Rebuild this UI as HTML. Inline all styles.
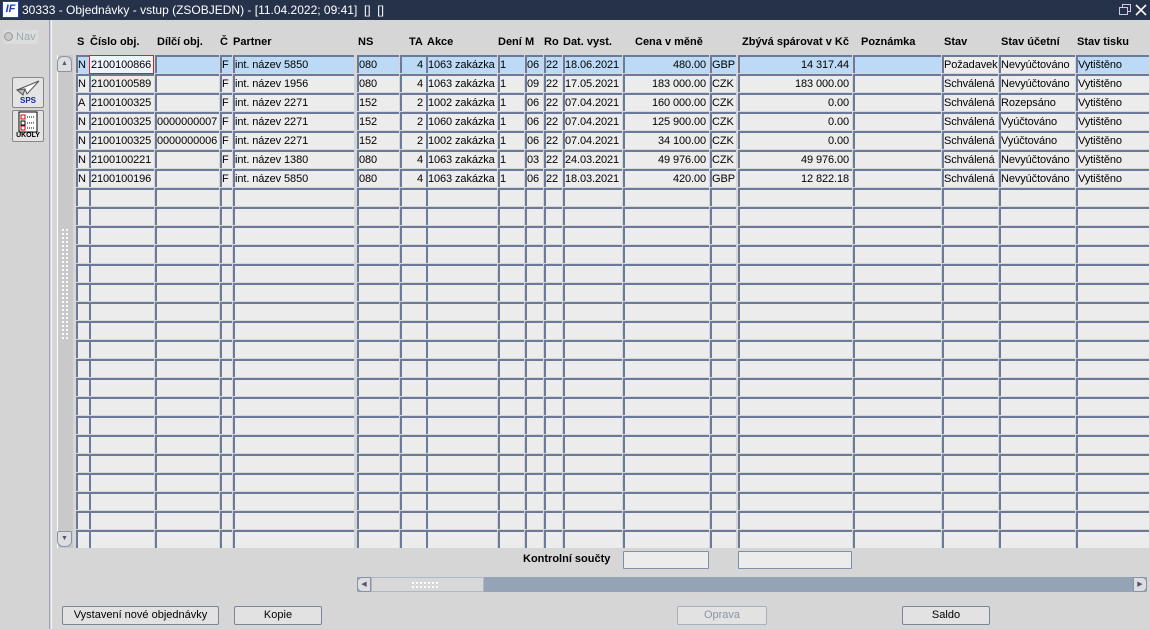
<!DOCTYPE html>
<html><head><meta charset="utf-8">
<style>
*{box-sizing:border-box;margin:0;padding:0}
body{width:1150px;height:629px;overflow:hidden;background:#d6d6d6;font-family:"Liberation Sans",sans-serif;font-size:11px;color:#000;position:relative}
.title{position:absolute;left:0;top:0;width:1150px;height:20px;background:#25324a;color:#fff;font-size:12px;line-height:20px}
.title .ico{position:absolute;left:2px;top:1px;width:17px;height:17px;background:#fff;border:1px solid #2040c0;color:#1a3cc8;font-weight:bold;font-style:italic;font-size:11px;line-height:15px;text-align:center}
.title .t{position:absolute;left:22px;top:0}
.left{position:absolute;left:0;top:20px;width:50px;height:609px;background:#d4d4d4;border-right:1px solid #9aa3b3}
.left:after{content:"";position:absolute;right:-3px;top:0;width:1px;height:609px;background:#f4f4f4}
.h{position:absolute;top:36px;font-weight:bold;font-size:11px}
.col{position:absolute;top:55px;height:494px;
background:repeating-linear-gradient(to bottom,#6a7a98 0 2px,transparent 2px 18px,#d6d6d6 18px 19px),linear-gradient(to right,#6a7a98 0 2px,#ececec 2px)}
.col div{height:19px;line-height:20px;padding-left:2px;white-space:nowrap;overflow:hidden;letter-spacing:-0.1px}
.col div.b{background:linear-gradient(to bottom,#6a7a98 0 2px,transparent 2px 18px,#d6d6d6 18px),linear-gradient(to right,#6a7a98 0 2px,#bcdaf6 2px)}
.col.r div{text-align:right;padding-right:3px}
.btn{position:absolute;top:606px;height:19px;background:#e2e2e2;border:1px solid #7a8596;border-radius:2px;text-align:center;line-height:17px;font-size:11px}
.box{position:absolute;top:551px;height:18px;background:#ececec;border:1px solid #8090aa;border-radius:1px}
</style></head><body>
<div class="title"><div class="ico">IF</div><div class="t">30333 - Objednávky - vstup (ZSOBJEDN) - [11.04.2022; 09:41]&nbsp; [] &nbsp;[]</div>
<svg style="position:absolute;left:1119px;top:4px" width="12" height="12"><rect x="3.5" y="0.5" width="8" height="7" fill="none" stroke="#ccd" /><rect x="0.5" y="3.5" width="8" height="7" fill="#25324a" stroke="#ccd"/></svg>
<svg style="position:absolute;left:1135px;top:4px" width="12" height="12"><path d="M1 1L11 11M11 1L1 11" stroke="#fff" stroke-width="1.6"/></svg>
</div>
<div class="left">
<div style="position:absolute;left:4px;top:10px;width:34px;height:14px;background:#dcdcdc;color:#9aa;font-size:11px;line-height:14px"><span style="display:inline-block;width:9px;height:9px;border-radius:50%;background:#c8c8c8;border:1px solid #999;vertical-align:-1px"></span> Nav</div>
<div style="position:absolute;left:12px;top:57px;width:32px;height:31px;background:#e4e4e4;border:1px solid #888;border-radius:2px">
<svg width="30" height="20"><path d="M4 12L26 3L14 16L12 11Z" fill="#fff" stroke="#555"/><path d="M4 12L12 11L10 17Z" fill="#bbb" stroke="#555"/></svg>
<div style="position:absolute;left:0;top:18px;width:30px;text-align:center;color:#1a2a9a;font-size:8px;font-weight:bold">SPS</div></div>
<div style="position:absolute;left:12px;top:90px;width:32px;height:32px;background:#e4e4e4;border:1px solid #888;border-radius:2px">
<svg width="30" height="22"><rect x="6" y="1" width="18" height="20" fill="#fff" stroke="#000"/><rect x="8" y="4" width="4" height="4" fill="none" stroke="#c00"/><rect x="8" y="10" width="4" height="4" fill="none" stroke="#000"/><rect x="8" y="15" width="4" height="4" fill="none" stroke="#c00"/><path d="M14 6h8M14 12h8M14 17h8" stroke="#000" stroke-dasharray="1 1"/></svg>
<div style="position:absolute;left:0;top:21px;width:30px;text-align:center;font-size:7px;font-weight:bold">ÚKOLY</div></div>
</div>

<div style="position:absolute;left:57px;top:55px;width:16px;height:493px;background:#c9c9c9;border-left:1px solid #fff"></div>
<div style="position:absolute;left:57px;top:56px;width:15px;height:16px;background:#dedede;border:1px solid #8594ab;border-radius:6px 6px 2px 2px;font-size:7px;text-align:center;line-height:14px;color:#557">▲</div>
<div style="position:absolute;left:57px;top:531px;width:15px;height:16px;background:#dedede;border:1px solid #8594ab;border-radius:2px 2px 6px 6px;font-size:7px;text-align:center;line-height:14px;color:#557">▼</div>
<div style="position:absolute;left:61px;top:228px;width:8px;height:112px;background-image:radial-gradient(#fff 1px,transparent 1.2px);background-size:4px 4px"></div>

<div class="h" style="left:77px">S</div>
<div class="h" style="left:90px">Číslo obj.</div>
<div class="h" style="left:157px">Dílčí obj.</div>
<div class="h" style="left:220px">Č</div>
<div class="h" style="left:233px">Partner</div>
<div class="h" style="left:358px">NS</div>
<div class="h" style="left:409px">TA</div>
<div class="h" style="left:427px">Akce</div>
<div class="h" style="left:498px">Dení</div>
<div class="h" style="left:525px">M</div>
<div class="h" style="left:544px">Ro</div>
<div class="h" style="left:563px">Dat. vyst.</div>
<div class="h" style="left:635px">Cena v měně</div>
<div class="h" style="left:742px">Zbývá spárovat v Kč</div>
<div class="h" style="left:861px">Poznámka</div>
<div class="h" style="left:944px">Stav</div>
<div class="h" style="left:1001px">Stav účetní</div>
<div class="h" style="left:1077px">Stav tisku</div>

<div class="col" style="left:76px;width:13px"><div class="b">N</div><div>N</div><div>A</div><div>N</div><div>N</div><div>N</div><div>N</div></div>
<div class="col" style="left:89px;width:65px"><div class="b" style="background:#eef4fb;outline:1px solid #e02020;outline-offset:-1px">2100100866</div><div>2100100589</div><div>2100100325</div><div>2100100325</div><div>2100100325</div><div>2100100221</div><div>2100100196</div></div>
<div class="col" style="left:155px;width:64px"><div class="b"></div><div></div><div></div><div>0000000007</div><div>0000000006</div></div>
<div class="col" style="left:220px;width:12px"><div class="b">F</div><div>F</div><div>F</div><div>F</div><div>F</div><div>F</div><div>F</div></div>
<div class="col" style="left:233px;width:121px"><div class="b">int. název 5850</div><div>int. název 1956</div><div>int. název 2271</div><div>int. název 2271</div><div>int. název 2271</div><div>int. název 1380</div><div>int. název 5850</div></div>
<div class="col" style="left:357px;width:42px"><div class="b">080</div><div>080</div><div>152</div><div>152</div><div>152</div><div>080</div><div>080</div></div>
<div class="col r" style="left:400px;width:26px"><div class="b">4</div><div>4</div><div>2</div><div>2</div><div>2</div><div>4</div><div>4</div></div>
<div class="col" style="left:426px;width:71px"><div class="b">1063 zakázka</div><div>1063 zakázka</div><div>1002 zakázka</div><div>1060 zakázka</div><div>1002 zakázka</div><div>1063 zakázka</div><div>1063 zakázka</div></div>
<div class="col" style="left:498px;width:26px"><div class="b">1</div><div>1</div><div>1</div><div>1</div><div>1</div><div>1</div><div>1</div></div>
<div class="col" style="left:525px;width:18px"><div class="b">06</div><div>09</div><div>06</div><div>06</div><div>06</div><div>03</div><div>06</div></div>
<div class="col" style="left:544px;width:18px"><div class="b">22</div><div>22</div><div>22</div><div>22</div><div>22</div><div>22</div><div>22</div></div>
<div class="col" style="left:563px;width:59px"><div class="b">18.06.2021</div><div>17.05.2021</div><div>07.04.2021</div><div>07.04.2021</div><div>07.04.2021</div><div>24.03.2021</div><div>18.03.2021</div></div>
<div class="col r" style="left:623px;width:86px"><div class="b">480.00</div><div>183 000.00</div><div>160 000.00</div><div>125 900.00</div><div>34 100.00</div><div>49 976.00</div><div>420.00</div></div>
<div class="col" style="left:710px;width:26px"><div class="b">GBP</div><div>CZK</div><div>CZK</div><div>CZK</div><div>CZK</div><div>CZK</div><div>GBP</div></div>
<div class="col r" style="left:738px;width:114px"><div class="b">14 317.44</div><div>183 000.00</div><div>0.00</div><div>0.00</div><div>0.00</div><div>49 976.00</div><div>12 822.18</div></div>
<div class="col" style="left:853px;width:88px"><div class="b"></div></div>
<div class="col" style="left:942px;width:56px"><div>Požadavek</div><div>Schválená</div><div>Schválená</div><div>Schválená</div><div>Schválená</div><div>Schválená</div><div>Schválená</div></div>
<div class="col" style="left:999px;width:76px"><div>Nevyúčtováno</div><div>Nevyúčtováno</div><div>Rozepsáno</div><div>Vyúčtováno</div><div>Vyúčtováno</div><div>Nevyúčtováno</div><div>Nevyúčtováno</div></div>
<div class="col" style="left:1076px;width:73px"><div class="b">Vytištěno</div><div>Vytištěno</div><div>Vytištěno</div><div>Vytištěno</div><div>Vytištěno</div><div>Vytištěno</div><div>Vytištěno</div></div>

<div style="position:absolute;left:523px;top:553px;font-weight:bold">Kontrolní součty</div>
<div class="box" style="left:623px;width:86px"></div>
<div class="box" style="left:738px;width:114px"></div>

<div style="position:absolute;left:357px;top:577px;width:790px;height:15px;background:#95a3b6"></div>
<div style="position:absolute;left:357px;top:577px;width:14px;height:15px;background:#dedede;border:1px solid #8594ab;border-radius:5px 1px 1px 5px;font-size:7px;line-height:13px;text-align:center;color:#557">◀</div>
<div style="position:absolute;left:371px;top:577px;width:113px;height:15px;background:#d8d8d8;border:1px solid #b0b8c6"><div style="position:absolute;left:39px;top:3px;width:28px;height:8px;background-image:radial-gradient(#fff 1px,transparent 1.2px);background-size:4px 4px"></div></div>
<div style="position:absolute;left:1133px;top:577px;width:14px;height:15px;background:#dedede;border:1px solid #8594ab;border-radius:1px 5px 5px 1px;font-size:7px;line-height:13px;text-align:center;color:#557">▶</div>

<div class="btn" style="left:62px;width:157px">Vystavení nové objednávky</div>
<div class="btn" style="left:234px;width:88px">Kopie</div>
<div class="btn" style="left:677px;width:90px;color:#8a94a6;border-color:#a8b0be">Oprava</div>
<div class="btn" style="left:902px;width:88px">Saldo</div>
</body></html>
